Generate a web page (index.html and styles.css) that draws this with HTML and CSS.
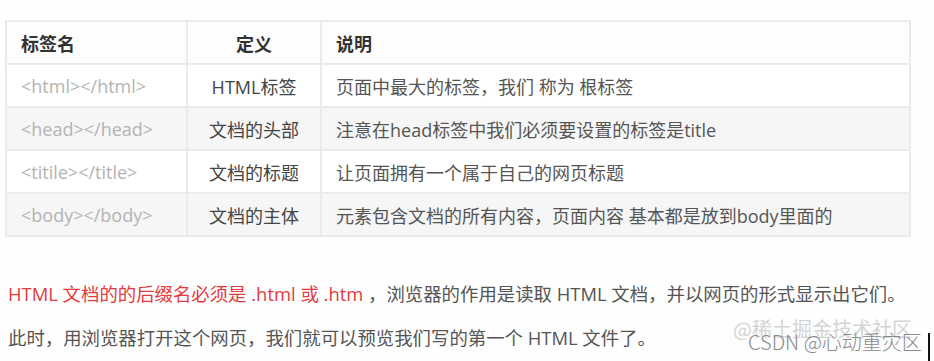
FILE: index.html
```html
<!DOCTYPE html>
<html lang="zh">
<head>
<meta charset="utf-8">
<link rel="stylesheet" href="styles.css">
</head>
<body>
<div class="page">
  <table class="tags">
    <thead>
      <tr><th class="c1">标签名</th><th class="c2">定义</th><th class="c3">说明</th></tr>
    </thead>
    <tbody>
      <tr><td class="c1">&lt;html&gt;&lt;/html&gt;</td><td class="c2">HTML标签</td><td class="c3">页面中最大的标签，我们 称为 根标签</td></tr>
      <tr class="alt"><td class="c1">&lt;head&gt;&lt;/head&gt;</td><td class="c2">文档的头部</td><td class="c3">注意在head标签中我们必须要设置的标签是title</td></tr>
      <tr><td class="c1">&lt;titile&gt;&lt;/title&gt;</td><td class="c2">文档的标题</td><td class="c3">让页面拥有一个属于自己的网页标题</td></tr>
      <tr class="alt"><td class="c1">&lt;body&gt;&lt;/body&gt;</td><td class="c2">文档的主体</td><td class="c3">元素包含文档的所有内容，页面内容 基本都是放到body里面的</td></tr>
    </tbody>
  </table>
  <p class="note"><span class="red">HTML 文档的的后缀名必须是 .html 或 .htm</span> ，浏览器的作用是读取 HTML 文档，并以网页的形式显示出它们。<br>此时，用浏览器打开这个网页，我们就可以预览我们写的第一个 HTML 文件了。</p>
  <div class="wm1">@稀土掘金技术社区</div>
  <div class="wm2">CSDN @心动重灾区</div>
  <div class="edge"></div>
</div>
</body>
</html>
```
FILE: styles.css
```css
html, body {
  margin: 0;
  padding: 0;
  background: #fdfefd;
}
.page {
  position: relative;
  width: 934px;
  height: 361px;
  overflow: hidden;
  padding-top: 20px;
  box-sizing: border-box;
  font-family: "Open Sans", "Noto Sans CJK SC", sans-serif;
}
.tags {
  margin-left: 5px;
  width: 906px;
  border-collapse: collapse;
  font-size: 18px;
  background: #fff;
}
.tags th, .tags td {
  border: 2px solid #ebebeb;
  height: 41px;
  padding: 0 14px;
  text-align: left;
}
.tags th {
  font-weight: bold;
  color: #333;
  background: #fcfdfc;
}
.tags .c1 { width: 151px; }
.tags .c2 { width: 104px; text-align: center; }
.tags td.c1 { color: #b3b3b3; }
.tags td.c2 { color: #444; }
.tags td.c3 { color: #555; }
.tags .alt td { background: #f6f6f6; }
.note {
  margin: 35px 0 0 8px;
  font-size: 18.4px;
  line-height: 44px;
  color: #555;
  white-space: nowrap;
}
.red { color: #e53a3f; }
.wm1 {
  position: absolute;
  left: 733px;
  top: 314px;
  font-size: 20px;
  color: #d4d4d4;
  font-family: "Noto Sans CJK SC", sans-serif;
}
.wm2 {
  position: absolute;
  left: 748px;
  top: 327px;
  font-size: 20px;
  color: #8a8a8a;
  font-weight: 300;
  font-family: "Noto Sans CJK SC", sans-serif;
}
.edge {
  position: absolute;
  left: 928px;
  top: 333px;
  width: 2px;
  height: 28px;
  background: #111;
}
```
